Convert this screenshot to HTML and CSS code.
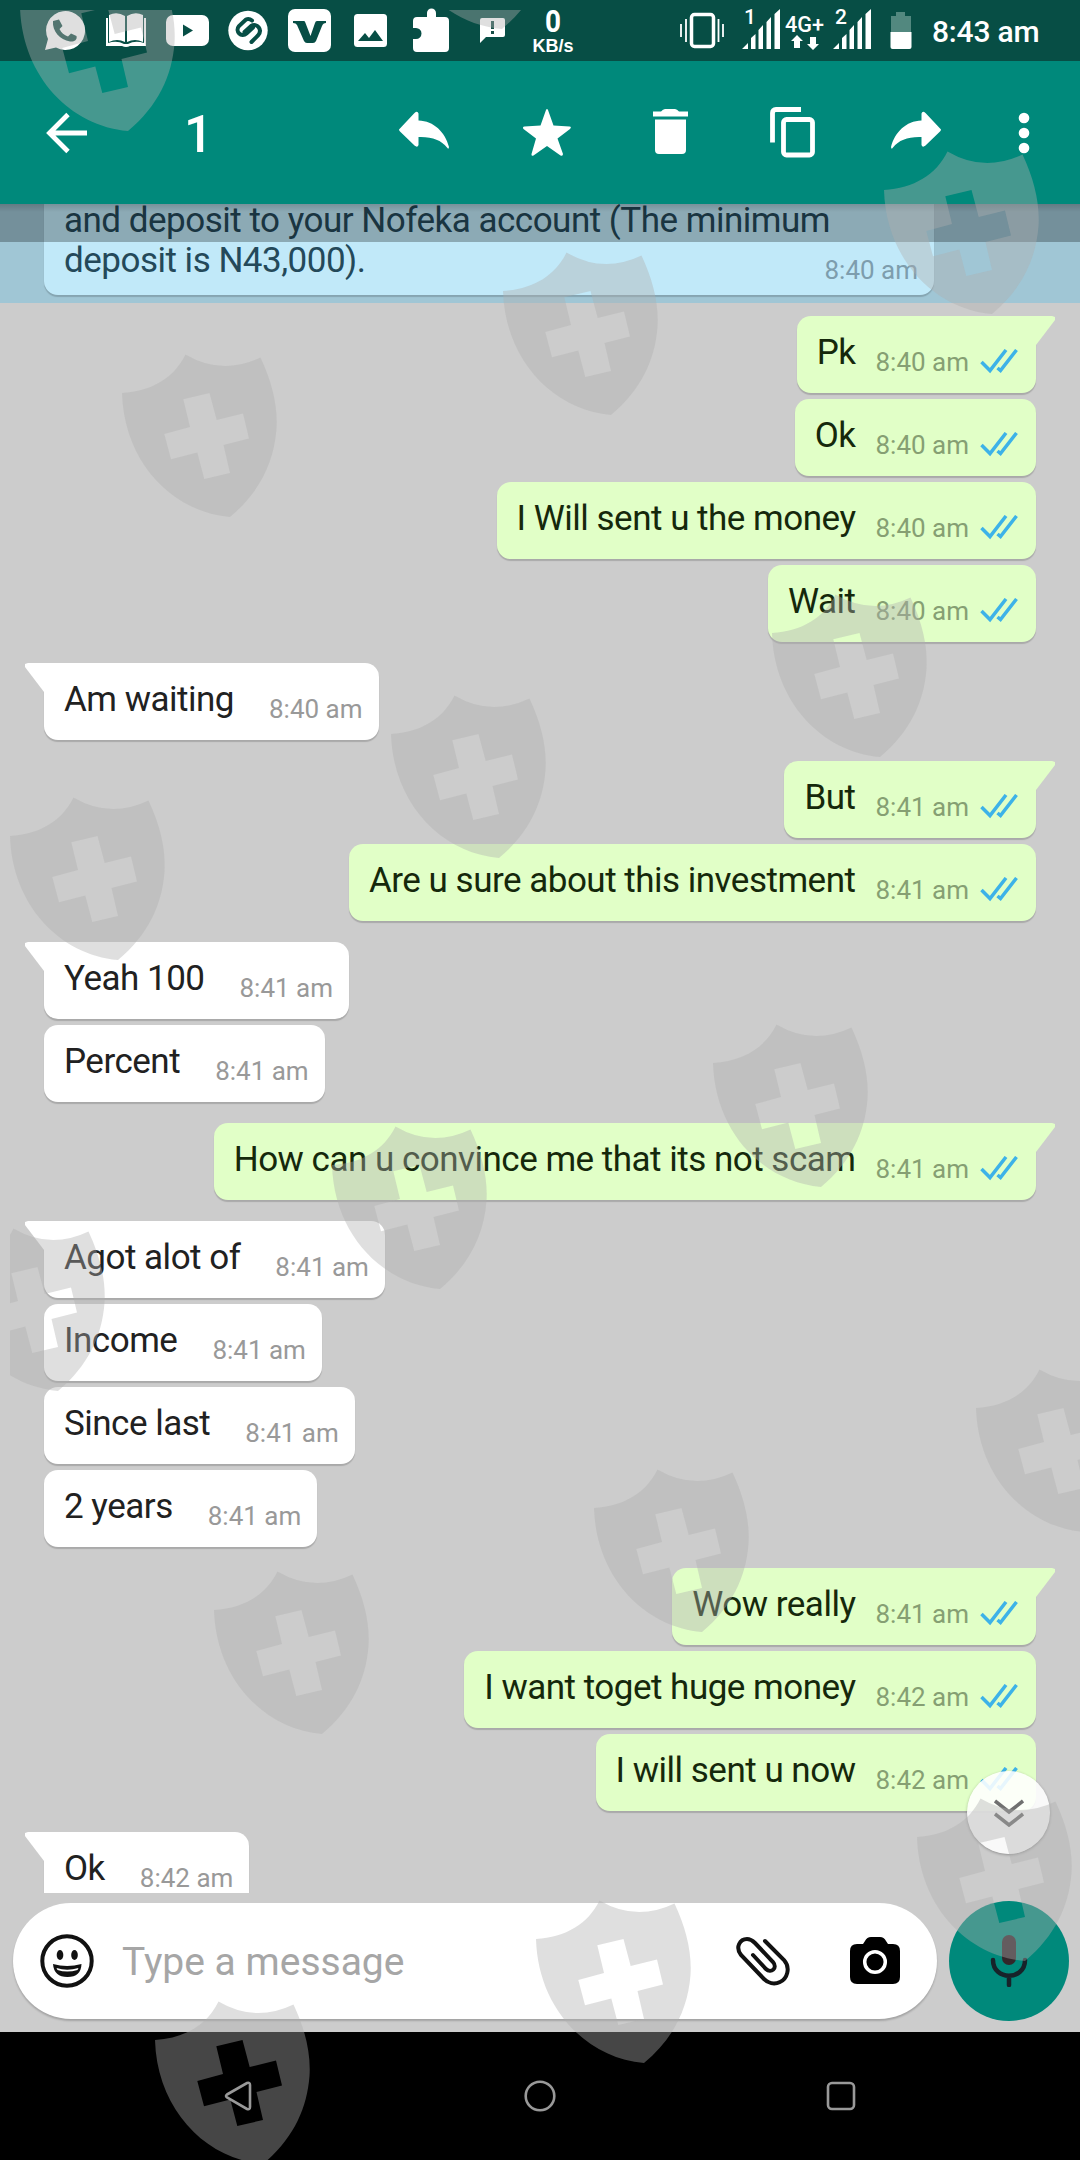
FILE: index.html
```html
<!DOCTYPE html>
<html lang="en">
<head>
  <meta charset="UTF-8">
  <meta name="viewport" content="width=device-width, initial-scale=1.0">
  <title>Chat</title>
  <link rel="stylesheet" href="styles.css">
</head>
<body>

  <!-- Shared shapes -->
  <svg class="defs" width="0" height="0">
    <symbol id="ticks" viewBox="0 0 38 25">
      <path d="M1.500 13L10 21.500L26 1M17.500 19L20.500 21.500L36.500 1" fill="none" stroke="#3db2e8" stroke-width="3.500"/>
    </symbol>
    <symbol id="shield" viewBox="0 0 160 165">
      <path fill-rule="evenodd" d="M0 39C30 37 52 24 63.500 .5Q100 22 138.500 3.500C150 28 156 52 154.500 75C152 108 138 138 108 163C50 158 2 108 0 39ZM61.300 45.300L68 73L42.300 80L49 105.300L75.300 98.500L82.300 125L108 119L101.500 91L127 84.500L121 59.500L94.700 66L87.500 39Z"/>
    </symbol>
    <symbol id="reply" viewBox="0 0 50 52">
      <path d="M0 22.500L15.500 6Q18.500 3.500 19.500 6.500V13.500C35 14 46 25 50 40Q49.500 43 48 40.500C42 33 33 29.500 19.500 30V38Q18.500 41 15.500 38.500L1 24.500Q0 23.500 0 22.500Z"/>
    </symbol>
  </svg>

  <div class="phone">

    <header class="status-bar">
      <svg width="44" height="61" viewBox="0 0 44 61">
        <path fill="#fff" d="M2 50L5 39A19.500 19.500 0 1 1 13 47.500Z"/>
        <path fill="#164f47" d="M10 21L16 19.500L19.500 26L16.500 29C18.500 33 21 35 25 36.500L28 33.500L33.500 36C34.500 40 31 42 27 41.500C17 40 9 31 10 21Z"/>
      </svg>
      <svg width="44" height="61" viewBox="0 0 44 61">
        <path fill="#fff" d="M5 15Q13 11 21 16V42Q13 38 5 42ZM39 15Q31 11 23 16V42Q31 38 39 42ZM2 18H4V43Q13 40 20 44H24Q31 40 40 43V18H42V46H26Q22 48 18 46H2Z"/>
      </svg>
      <svg width="44" height="61" viewBox="0 0 44 61">
        <rect x="1" y="15" width="43" height="31" rx="7" fill="#fff"/>
        <path fill="#074e45" d="M18 24.500L28 30.500L18 36.500Z"/>
      </svg>
      <svg width="44" height="61" viewBox="0 0 44 61">
        <circle cx="22" cy="30.500" r="19.700" fill="#fff"/>
        <path fill="none" stroke="#074e45" stroke-width="4" stroke-linecap="round" d="M20 19.500L13 26C8.500 31.500 15.500 38 20.500 33.500L27 27.500M25.500 42L32 35.500C37 29.500 31 22.500 25 26L18.500 32M20 19.500Q23 18 26 20.500"/>
      </svg>
      <svg width="44" height="61" viewBox="0 0 44 61">
        <rect x="1" y="9" width="43" height="43" rx="7" fill="#fff"/>
        <path fill="#074e45" d="M6 21H17Q18 21 18.500 23L23.500 36L28 23Q28.500 21 30 21H39V23Q36 23 35 26L29 41Q28 43 26 43H20Q18 43 17 41L10 25Q9 23 6 23Z"/>
      </svg>
      <svg width="44" height="61" viewBox="0 0 44 61">
        <rect x="6" y="14" width="33" height="33" rx="3.500" fill="#fff"/>
        <path fill="#074e45" d="M10 41L17 33L21 38L27 30L35 41Z"/>
      </svg>
      <svg width="44" height="61" viewBox="0 0 44 61">
        <path fill="#fff" d="M8 17H18V13A4.500 4.500 0 0 1 27 13V17H36Q40 17 40 21V48Q40 52 36 52H8Q4 52 4 48V39H7A5.500 5.500 0 0 0 7 28H4V21Q4 17 8 17Z"/>
      </svg>
      <svg width="44" height="61" viewBox="0 0 44 61">
        <path fill="#fff" d="M12 18H33Q35 18 35 20V35Q35 37 33 37H16L10 43V20Q10 18 12 18Z"/>
        <path fill="none" stroke="#164f47" stroke-width="3" d="M22.500 21V29M22.500 31V34"/>
      </svg>
      <div class="speed"><b>0</b><span>KB/s</span></div>
      <svg class="vibrate" width="44" height="61" viewBox="0 0 44 61">
        <rect x="11.500" y="14.500" width="22" height="32" rx="3" fill="none" stroke="#fff" stroke-width="3.500"/>
        <path fill="none" stroke="#fff" stroke-width="1.800" d="M1 24V37M6 19V42M38.500 19V42M43 24V37"/>
      </svg>
      <svg class="signals" width="134" height="61" viewBox="0 0 134 61">
        <g id="bars" fill="#fff">
          <path d="M2 49L8 43V49ZM11 49V38L15.500 34V49ZM18.500 49V30L23 25V49ZM26.500 49V22L31 17V49ZM34.500 49V14L40 9V49Z"/>
        </g>
        <use href="#bars" x="91"/>
        <text x="4" y="24" class="sim">1</text>
        <text x="95" y="24" class="sim">2</text>
        <text x="45" y="32" class="net" textLength="39" lengthAdjust="spacingAndGlyphs">4G+</text>
        <path fill="#fff" d="M57 35L63 41H60V48H54V41H51ZM73 50L79 44H76V37H70V44H67Z"/>
      </svg>
      <svg class="battery" width="22" height="61" viewBox="0 0 22 61">
        <path fill="#52887f" d="M1 16H6V12H15V16H21V33H1Z"/>
        <path fill="#fff" d="M0.500 32H21.500V47Q21.500 49 19.500 49H2.500Q.5 49 .5 47Z"/>
      </svg>
      <span class="clock">8:43 am</span>
    </header>

    <nav class="toolbar">
      <svg class="back" width="42" height="52" viewBox="0 0 42 52">
        <path fill="none" stroke="#fff" stroke-width="4.800" d="M22 7.500L3.500 26L22 44.500M3 26H41"/>
      </svg>
      <span class="count">1</span>
      <div class="actions">
        <svg width="50" height="52"><use href="#reply"/></svg>
        <svg width="50" height="52" viewBox="0 0 50 52">
          <path d="M24 3Q25 1 26 3L31.500 18.500L47.500 19.500Q50 20 48 22L35.500 31.500L41 47Q41 49.500 38.500 48.500L25 39L11.500 48.500Q9 49.500 9.500 47L14 31.500L1.500 22Q0 20 2.500 19.500L18.500 18.500Z"/>
        </svg>
        <svg width="50" height="52" viewBox="0 0 50 52">
          <path d="M8 4.500H16Q18 2 20 2H30Q32 2 34 4.500H43V9.500H8ZM10 12.500H41V43Q41 47 37 47H14Q10 47 10 43Z"/>
        </svg>
        <svg width="50" height="52" viewBox="0 0 50 52">
          <path class="outline" d="M4.500 35.500V6Q4.500 2.500 8 2.500H33"/>
          <rect class="outline" x="15.500" y="12.500" width="29" height="35.500" rx="3"/>
        </svg>
        <svg class="forward" width="50" height="52"><use href="#reply"/></svg>
      </div>
      <svg class="more" width="12" height="52" viewBox="0 0 12 52">
        <circle cx="6" cy="11" r="5.300"/>
        <circle cx="6" cy="26" r="5.300"/>
        <circle cx="6" cy="41" r="5.300"/>
      </svg>
    </nav>

    <main class="chat">
      <div class="selected">
        <div class="bubble in">
          <p>and deposit to your Nofeka account (The minimum<br>deposit is N43,000).</p>
          <time>8:40 am</time>
        </div>
      </div>

      <div class="group">
        <div class="bubble out tail"><p>Pk</p><time>8:40 am</time><svg class="ticks"><use href="#ticks"/></svg></div>
        <div class="bubble out"><p>Ok</p><time>8:40 am</time><svg class="ticks"><use href="#ticks"/></svg></div>
        <div class="bubble out"><p>I Will sent u the money</p><time>8:40 am</time><svg class="ticks"><use href="#ticks"/></svg></div>
        <div class="bubble out"><p>Wait</p><time>8:40 am</time><svg class="ticks"><use href="#ticks"/></svg></div>
      </div>
      <div class="group">
        <div class="bubble in tail"><p>Am waiting</p><time>8:40 am</time></div>
      </div>
      <div class="group">
        <div class="bubble out tail"><p>But</p><time>8:41 am</time><svg class="ticks"><use href="#ticks"/></svg></div>
        <div class="bubble out"><p>Are u sure about this investment</p><time>8:41 am</time><svg class="ticks"><use href="#ticks"/></svg></div>
      </div>
      <div class="group">
        <div class="bubble in tail"><p>Yeah 100</p><time>8:41 am</time></div>
        <div class="bubble in"><p>Percent</p><time>8:41 am</time></div>
      </div>
      <div class="group">
        <div class="bubble out tail"><p>How can u convince me that its not scam</p><time>8:41 am</time><svg class="ticks"><use href="#ticks"/></svg></div>
      </div>
      <div class="group">
        <div class="bubble in tail"><p>Agot alot of</p><time>8:41 am</time></div>
        <div class="bubble in"><p>Income</p><time>8:41 am</time></div>
        <div class="bubble in"><p>Since last</p><time>8:41 am</time></div>
        <div class="bubble in"><p>2 years</p><time>8:41 am</time></div>
      </div>
      <div class="group">
        <div class="bubble out tail"><p>Wow really</p><time>8:41 am</time><svg class="ticks"><use href="#ticks"/></svg></div>
        <div class="bubble out"><p>I want toget huge money</p><time>8:42 am</time><svg class="ticks"><use href="#ticks"/></svg></div>
        <div class="bubble out"><p>I will sent u now</p><time>8:42 am</time><svg class="ticks"><use href="#ticks"/></svg></div>
      </div>
      <div class="group">
        <div class="bubble in tail"><p>Ok</p><time>8:42 am</time></div>
      </div>

      <div class="scroll-down">
        <svg width="30" height="28" viewBox="0 0 30 28">
          <path fill="none" stroke="#707070" stroke-width="3.500" d="M1 2L15 13L29 2M1 15L15 26L29 15"/>
        </svg>
      </div>
    </main>

    <footer class="composer">
      <div class="input">
        <svg width="54" height="54" viewBox="0 0 54 54">
          <circle cx="27" cy="27" r="24.700" fill="none" stroke="#111" stroke-width="4"/>
          <ellipse cx="20" cy="21" rx="3.300" ry="5" fill="#111"/>
          <ellipse cx="34.500" cy="21" rx="3.300" ry="5" fill="#111"/>
          <path fill="#111" fill-rule="evenodd" d="M13 30Q27 34 41.500 30Q41 43 27.500 43Q14 43 13 30ZM16.500 34Q27 37.500 38.500 34L37.500 36Q27 39 17.500 36Z"/>
        </svg>
        <span class="placeholder">Type a message</span>
        <svg class="clip" width="54" height="50" viewBox="0 0 54 50">
          <path fill="none" stroke="#111" stroke-width="4" stroke-linecap="round" d="M29 5L48 24C55 32 51 43 44 46C38 49 32 47 28 43L5 19C-1 11 4 3 11 3C14 3 17 5 19 7L37 26C42 32 35 38 30 33L17 19"/>
        </svg>
        <svg width="50" height="50" viewBox="0 0 50 50">
          <path d="M15 5Q17 1 21 1H30Q34 1 36 5L38 8H43Q50 8 50 15V41Q50 48 43 48H7Q0 48 0 41V15Q0 8 7 8H13Z"/>
          <circle cx="25" cy="26" r="10.300" stroke="#fff" stroke-width="3.500"/>
        </svg>
      </div>
      <div class="mic">
        <svg width="38" height="52" viewBox="0 0 38 52">
          <rect x="12" y="0" width="14" height="30" rx="7" fill="#33262a"/>
          <path fill="none" stroke="#17232a" stroke-width="4.500" stroke-linecap="round" d="M3 25C3 46 35 46 35 25M19 41V50"/>
        </svg>
      </div>
    </footer>

    <div class="nav-bar">
      <svg width="32" height="32" viewBox="0 0 32 32"><path d="M4 14.500L24 3Q27 2 27 5V27Q27 30 24 29L4 17.500Q2 16 4 14.500Z"/></svg>
      <svg width="32" height="32" viewBox="0 0 32 32"><circle cx="16" cy="16" r="14.300"/></svg>
      <svg width="32" height="32" viewBox="0 0 32 32"><rect x="3" y="3" width="26" height="26" rx="4"/></svg>
    </div>

    <!-- Watermark layer -->
    <svg class="watermark" width="1080" height="2160" viewBox="0 0 1080 2160">
      <use href="#shield" width="160" height="165" x="20" y="-32"/>
      <use href="#shield" width="160" height="165" x="394" y="-134"/>
      <use href="#shield" width="160" height="165" x="884" y="151"/>
      <use href="#shield" width="160" height="165" x="503" y="252"/>
      <use href="#shield" width="160" height="165" x="122" y="354"/>
      <use href="#shield" width="160" height="165" x="772" y="594"/>
      <use href="#shield" width="160" height="165" x="391" y="695"/>
      <use href="#shield" width="160" height="165" x="10" y="797"/>
      <use href="#shield" width="160" height="165" x="713" y="1024"/>
      <use href="#shield" width="160" height="165" x="332" y="1126"/>
      <use href="#shield" width="160" height="165" x="-50" y="1228"/>
      <use href="#shield" width="160" height="165" x="976" y="1369"/>
      <use href="#shield" width="160" height="165" x="594" y="1469"/>
      <use href="#shield" width="160" height="165" x="214" y="1571"/>
      <use href="#shield" width="160" height="165" x="917" y="1798"/>
      <use href="#shield" width="160" height="165" x="536" y="1900"/>
      <use href="#shield" width="160" height="165" x="155" y="2001"/>
    </svg>
  </div>

</body>
</html>
```
FILE: styles.css
```css
* {
  box-sizing: border-box;
}
body {
  margin: 0;
  background: #000;
  font-family: Roboto, "Liberation Sans", sans-serif;
}
.defs {
  position: absolute;
}
.phone {
  position: relative;
  display: flex;
  flex-direction: column;
  width: 1080px;
  height: 2160px;
  overflow: hidden;
}
svg {
  flex-shrink: 0;
}

/* Status bar */
.status-bar {
  display: flex;
  align-items: center;
  height: 61px;
  padding-left: 43px;
  background: #074e45;
  color: #fff;
}
.status-bar > svg {
  margin-right: 17px;
}
.speed {
  display: flex;
  flex-direction: column;
  align-items: center;
  width: 44px;
}
.speed b {
  font-size: 31px;
  line-height: 31px;
  transform: scaleX(0.9);
}
.speed span {
  font-family: "Liberation Sans", sans-serif;
  font-size: 18px;
  font-weight: bold;
  line-height: 18px;
}
.status-bar .vibrate {
  margin: 0 16px 0 105px;
}
.status-bar .signals {
  margin-right: 16px;
}
.status-bar .battery {
  margin-right: 20px;
}
.sim {
  font-size: 21px;
  font-weight: 500;
  fill: #fff;
}
.net {
  font-size: 22px;
  font-weight: 500;
  fill: #fff;
}
.clock {
  font-size: 30px;
  font-weight: 500;
  letter-spacing: -0.2px;
  line-height: 34px;
  margin-top: 2px;
  white-space: nowrap;
}

/* Selection toolbar */
.toolbar {
  display: flex;
  align-items: center;
  height: 143px;
  padding-left: 46px;
  background: #00897b;
  color: #fff;
  fill: #fff;
}
.count {
  width: 215px;
  margin: 3px 0 0 96px;
  font-size: 51px;
  font-weight: 500;
}
.actions {
  display: flex;
  gap: 73px;
}
.outline {
  fill: none;
  stroke: #fff;
  stroke-width: 4.8;
}
.forward {
  transform: scaleX(-1);
}
.more {
  margin-left: 77px;
}

/* Chat */
.chat {
  position: relative;
  height: 1689px;
  overflow: hidden;
  background: #ccc;
}
.chat::before {
  content: "";
  position: absolute;
  z-index: 1;
  top: 0;
  left: 0;
  right: 0;
  height: 38px;
  background: linear-gradient(rgba(0, 0, 0, 0.15), transparent 8px), rgba(0, 0, 0, 0.27);
}
.selected {
  height: 99px;
  padding: 0 44px;
  margin-bottom: 13px;
  background: #a0c6d5;
}
.group {
  display: flex;
  flex-direction: column;
  gap: 6px;
  padding: 0 44px;
  margin-bottom: 21px;
}
.bubble {
  position: relative;
  display: flex;
  align-items: flex-end;
  height: 77px;
  padding: 16px 16px 16px 20px;
  border-radius: 14px;
  box-shadow: 0 2px 1px rgba(0, 0, 0, 0.17);
  white-space: nowrap;
}
.bubble p {
  align-self: flex-start;
  margin: 1px 0 0;
  font-size: 35px;
  line-height: 40px;
  letter-spacing: -0.5px;
}
.bubble time {
  font-size: 26px;
  line-height: 30px;
}
.in {
  align-self: flex-start;
  background: #fff;
  color: #212121;
}
.in time {
  margin-left: 35px;
  color: #999;
}
.out {
  align-self: flex-end;
  padding-right: 18px;
  background: #e1ffc7;
  color: #15280b;
}
.out time {
  margin-left: 20px;
  color: #869f73;
}
.ticks {
  width: 38px;
  height: 25px;
  margin: 0 0 3px 11px;
}
.tail.in {
  border-top-left-radius: 0;
}
.tail.out {
  border-top-right-radius: 0;
}
.tail::before {
  content: "";
  position: absolute;
  top: 0;
  width: 20px;
  height: 29px;
  background: inherit;
}
.tail.in::before {
  left: -19px;
  clip-path: polygon(3px 0, 100% 0, 100% 100%, 95% 100%, 0 4px, 0 1px);
}
.tail.out::before {
  right: -19px;
  clip-path: polygon(0 0, 17px 0, 20px 1px, 20px 4px, 5% 100%, 0 100%);
}
.selected .bubble {
  width: 890px;
  height: 111px;
  top: -20px;
  padding-bottom: 10px;
  background: #c1e9f9;
  color: #24495a;
}
.selected .bubble p {
  flex: 1;
  min-width: 0;
}
.selected .bubble time {
  margin-left: 0;
  color: #7d9dad;
}
.scroll-down {
  position: absolute;
  right: 30px;
  top: 1567px;
  display: flex;
  align-items: center;
  justify-content: center;
  width: 83px;
  height: 83px;
  border-radius: 50%;
  background: rgba(255, 255, 255, 0.88);
  box-shadow: 0 1px 3px rgba(0, 0, 0, 0.3);
}

/* Composer */
.composer {
  display: flex;
  align-items: center;
  gap: 12px;
  height: 139px;
  padding: 0 11px 3px 13px;
  background: #ccc;
}
.input {
  display: flex;
  align-items: center;
  flex: 1;
  height: 116px;
  padding: 0 37px 0 27px;
  border-radius: 58px;
  background: #fff;
  box-shadow: 0 2px 2px rgba(0, 0, 0, 0.2);
}
.placeholder {
  flex: 1;
  margin: 2px 0 0 28px;
  font-size: 39px;
  color: #a6a6a6;
}
.clip {
  margin-right: 60px;
}
.mic {
  display: flex;
  align-items: center;
  justify-content: center;
  width: 120px;
  height: 120px;
  border-radius: 50%;
  background: #00897b;
}

/* System navigation */
.nav-bar {
  display: flex;
  justify-content: center;
  gap: 269px;
  height: 128px;
  padding-top: 48px;
  background: #000;
}
.nav-bar svg {
  fill: none;
  stroke: #999;
  stroke-width: 2.6;
}

.watermark {
  position: absolute;
  z-index: 2;
  top: 0;
  left: 0;
  fill: rgba(175, 175, 175, 0.4);
  clip-path: inset(10px 0 0 10px);
  pointer-events: none;
}
```
